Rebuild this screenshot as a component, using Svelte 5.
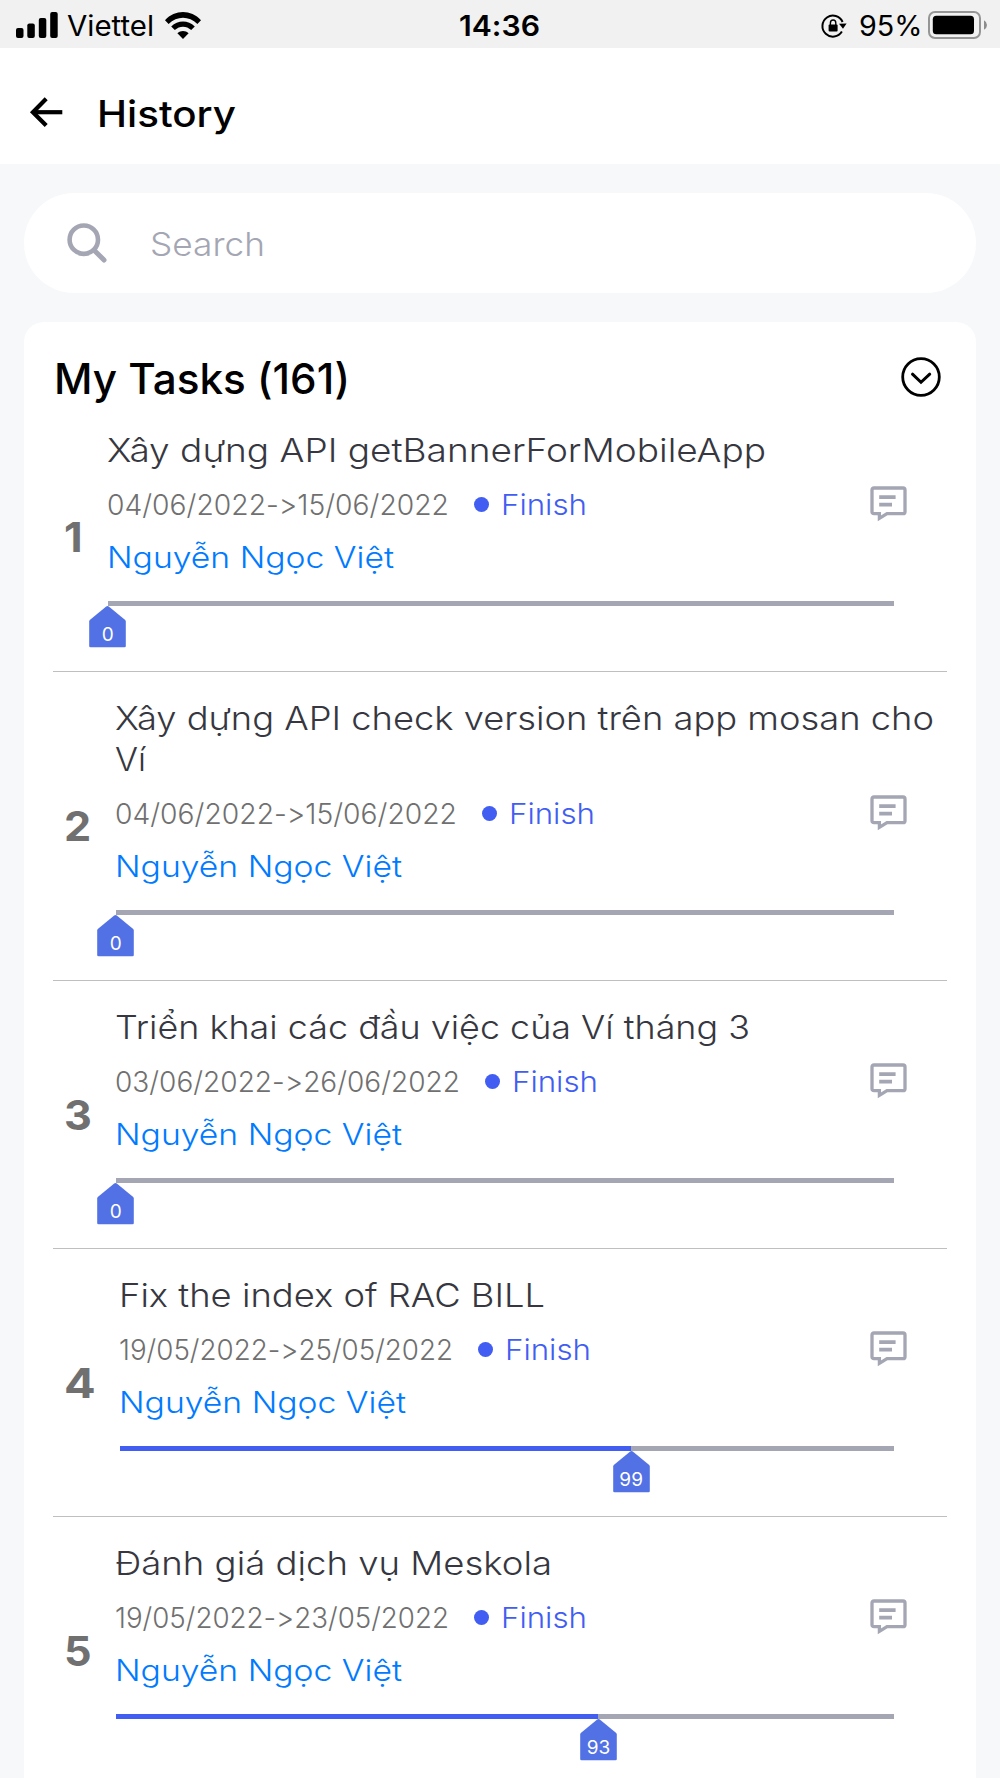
<script>
  const tasks = [
    {
      lines: [{ text: 'Xây dựng API getBannerForMobileApp', width: 659 }],
      dates: '04/06/2022->15/06/2022', datesWidth: 342, progress: 0
    },
    {
      lines: [
        { text: 'Xây dựng API check version trên app mosan cho', width: 819 },
        { text: 'Ví', width: 31 }
      ],
      dates: '04/06/2022->15/06/2022', datesWidth: 342, progress: 0
    },
    {
      lines: [{ text: 'Triển khai các đầu việc của Ví tháng 3', width: 635 }],
      dates: '03/06/2022->26/06/2022', datesWidth: 345, progress: 0
    },
    {
      lines: [{ text: 'Fix the index of RAC BILL', width: 426 }],
      dates: '19/05/2022->25/05/2022', datesWidth: 334, progress: 99
    },
    {
      lines: [{ text: 'Đánh giá dịch vụ Meskola', width: 437 }],
      dates: '19/05/2022->23/05/2022', datesWidth: 334, progress: 93
    }
  ];

  const MAX_PROGRESS = 150;

  // Stretches a single-line label so that it fills the given width.
  function fit(node, width) {
    const natural = node.getBoundingClientRect().width;
    node.style.transformOrigin = '0 50%';
    node.style.transform = `scaleX(${width / natural})`;
    node.style.width = `${natural + 0.1}px`;
    node.style.marginRight = `${width - natural}px`;
  }
</script>

<div class="screen">
  <div class="status">
    <div class="side">
      <svg class="signal" width="42" height="26" viewBox="0 0 42 26">
        <rect x="0" y="16" width="7.5" height="10" rx="2" />
        <rect x="11.3" y="11.5" width="7.5" height="14.5" rx="2" />
        <rect x="22.8" y="6" width="7.5" height="20" rx="2" />
        <rect x="34.2" y="0" width="7.5" height="26" rx="2" />
      </svg>
      <div class="carrier"><span use:fit={87}>Viettel</span></div>
      <svg class="wifi" width="36" height="27" viewBox="0 0 36 27">
        <path d="M0 8.2 C10 -2.7 26 -2.7 36 8.2 L32.4 11.9 C24 3.6 12 3.6 3.6 11.9 Z" />
        <path d="M6.2 14.5 C12.8 7.9 23.2 7.9 29.8 14.5 L26.2 18.1 C21.4 13.6 14.6 13.6 9.8 18.1 Z" />
        <path d="M12.4 21.2 C15.6 18.3 20.4 18.3 23.6 21.2 L18 27 Z" />
      </svg>
    </div>
    <div class="clock"><span use:fit={81}>14:36</span></div>
    <div class="side right">
      <svg class="lock" width="26" height="24" viewBox="0 0 26 24">
        <path d="M20.9 17.6 A10.5 10.5 0 1 1 21.6 8" fill="none" stroke="#000" stroke-width="2" />
        <path d="M18 9.8 L25.6 9.4 L22 14.8 Z" />
        <rect x="7.6" y="10.4" width="9" height="7.2" rx="1" />
        <path d="M9.4 11 V9 A2.7 3 0 0 1 14.8 9 V11" fill="none" stroke="#000" stroke-width="1.4" />
      </svg>
      <div class="percent"><span use:fit={63.5}>95%</span></div>
      <svg class="battery" width="60" height="28" viewBox="0 0 60 28">
        <rect x="1" y="1" width="51" height="26" rx="6" fill="none" stroke="#959595" stroke-width="2" />
        <rect x="4.8" y="4.8" width="41.2" height="18.4" rx="3.5" />
        <path d="M56 9.3 Q59 11 59 14 Q59 17 56 18.7 Z" fill="#8c8c8c" />
      </svg>
    </div>
  </div>

  <header class="header">
    <svg width="33" height="31" viewBox="0 0 33 31" fill="none" stroke="#000" stroke-width="4.2">
      <path d="M3 15.2 H32.3" />
      <path d="M16.2 1.8 L2.9 15.2 L16.2 28.6" />
    </svg>
    <h1 use:fit={139}>History</h1>
  </header>

  <main>
    <div class="search">
      <svg width="40" height="40" viewBox="0 0 40 40" fill="none" stroke="#a4a6b3">
        <circle cx="16.8" cy="16.7" r="14.2" stroke-width="4.6" />
        <path d="M27.4 27.4 L37 37" stroke-width="5" stroke-linecap="round" />
      </svg>
      <span class="placeholder" use:fit={115}>Search</span>
    </div>

    <section class="card">
      <div class="card-head">
        <h2 use:fit={296}>My Tasks (161)</h2>
        <svg class="chevron" width="40" height="40" viewBox="0 0 40 40" fill="none" stroke="#000">
          <circle cx="20" cy="20" r="18.3" stroke-width="2.8" />
          <path d="M11.5 17.2 L20 25.3 L28.7 17.2" stroke-width="3" stroke-linecap="round" />
        </svg>
      </div>

      <ol class="tasks">
        {#each tasks as task, i}
          <li class="task">
            <span class="number">{i + 1}</span>
            <div class="body">
              <div class="title">
                {#each task.lines as line}
                  <div class="line"><span class="label" use:fit={line.width}>{line.text}</span></div>
                {/each}
              </div>
              <div class="meta">
                <span class="label dates" use:fit={task.datesWidth}>{task.dates}</span>
                <span class="dot"></span>
                <span class="label state" use:fit={86}>Finish</span>
                <svg class="comment" width="37" height="37" viewBox="0 0 37 37" fill="none" stroke="#a4a6b3" stroke-width="3.3">
                  <path d="M4 2 H33 Q35 2 35 4 V25.7 Q35 27.7 33 27.7 H17 L9.4 32.4 V27.7 H4 Q2 27.7 2 25.7 V4 Q2 2 4 2 Z" />
                  <path d="M9.2 11.2 H25.6 M9.2 18.6 H22" stroke-width="3.8" />
                </svg>
              </div>
              <div class="person"><span class="label" use:fit={287}>Nguyễn Ngọc Việt</span></div>
              <div class="track">
                <div class="filled" style:width="{(task.progress / MAX_PROGRESS) * 100}%"></div>
                <div class="marker" style:left="{(task.progress / MAX_PROGRESS) * 100}%">
                  <svg width="37" height="42" viewBox="0 0 37 42">
                    <path d="M17.2 .6 Q18.5 -.4 19.8 .6 L36.2 14 Q36.8 14.6 36.8 15.4 V40 Q36.8 41.3 35.5 41.3 H1.5 Q.2 41.3 .2 40 V15.4 Q.2 14.6 .8 14 Z" fill="#5271e4" />
                  </svg>
                  <span class="value">{task.progress}</span>
                </div>
              </div>
            </div>
          </li>
        {/each}
      </ol>
    </section>
  </main>
</div>

<style>
  :global(body) {
    background: #f7f8fa;
  }

  .screen {
    width: 1000px;
    height: 1778px;
    overflow: hidden;
    background: #f7f8fa;
    color: #000;
    font-family: Inter, 'Noto Sans', sans-serif;
    font-feature-settings: 'calt' 0;
  }

  .screen :global(svg) {
    display: block;
    flex: none;
    overflow: visible;
  }

  .status {
    display: grid;
    grid-template-columns: 1fr auto 1fr;
    align-items: center;
    height: 48px;
    padding: 0 12px;
    box-sizing: border-box;
    background: #f1f1f1;
    font-size: 28.5px;
    line-height: 48px;
    white-space: nowrap;
  }

  .status span {
    display: inline-block;
    padding-top: 2px;
  }

  .side {
    display: flex;
    align-items: center;
  }

  .signal {
    margin-left: 4px;
  }

  .right {
    justify-content: flex-end;
  }

  .carrier {
    margin: 0 11px 0 9px;
  }

  .clock {
    font-weight: 600;
  }

  .lock {
    margin: 2px 12px 0 0;
  }

  .percent {
    margin-right: 5px;
  }

  .header {
    display: flex;
    align-items: center;
    gap: 34px;
    height: 116px;
    padding: 0 30px;
    box-sizing: border-box;
    background: #fff;
  }

  .header svg {
    margin-top: 13px;
  }

  h1,
  h2 {
    flex: none;
    margin: 0;
    font-weight: 450;
    white-space: nowrap;
  }

  h1 {
    padding-top: 15px;
    font-size: 36.5px;
    line-height: 44px;
  }

  main {
    padding: 29px 24px 0;
  }

  .search {
    display: flex;
    align-items: center;
    gap: 43px;
    height: 100px;
    padding-left: 43px;
    border-radius: 50px;
    background: #fff;
  }

  .placeholder {
    padding-top: 1px;
    color: #a4a6b3;
    font-size: 33px;
    font-weight: 300;
    white-space: nowrap;
  }

  .card {
    height: 1500px;
    margin-top: 29px;
    padding: 0 29px;
    border-radius: 20px;
    background: #fff;
  }

  .card-head {
    display: flex;
    align-items: flex-start;
    justify-content: space-between;
    height: 82px;
    padding: 32px 6px 0 1px;
    box-sizing: border-box;
  }

  h2 {
    font-size: 42.5px;
    line-height: 50px;
  }

  .chevron {
    margin-top: 3px;
  }

  .tasks {
    margin: 0;
    padding: 0;
    list-style: none;
  }

  .task {
    display: grid;
    grid-template-columns: 62.5px 1fr;
    padding: 25px 0 65px;
    border-bottom: 1.4px solid #bfbfbf;
  }

  .task:first-child {
    grid-template-columns: 54.5px 1fr;
  }

  .task:nth-child(4) {
    grid-template-columns: 67px 1fr;
  }

  .number {
    align-self: center;
    justify-self: start;
    margin: 40px 0 0 11px;
    color: #707070;
    font-size: 41.5px;
    font-weight: 700;
    line-height: 50px;
    transform: scaleX(1.04);
    transform-origin: 0 50%;
  }

  .task:nth-child(4) .number {
    transform: scaleX(1.13);
  }

  .label {
    display: inline-block;
    flex: none;
    white-space: nowrap;
    font-weight: 300;
  }

  .title {
    color: #363740;
    font-size: 33px;
    line-height: 42px;
  }

  .line {
    height: 41.2px;
    margin-left: -1px;
  }

  .meta {
    display: flex;
    align-items: center;
    height: 40px;
    margin-top: 14.6px;
    font-size: 28.5px;
    line-height: 40px;
  }

  .dates {
    margin-left: -0.7px;
    color: #707070;
  }

  .dot {
    width: 15px;
    height: 15px;
    margin: 0 12px 0 24.7px;
    border-radius: 50%;
    background: #415df2;
  }

  .state {
    color: #415df2;
  }

  .comment {
    margin: 0 40px 0 auto;
  }

  .person {
    height: 40px;
    margin-top: 12px;
    margin-left: -0.7px;
    color: #007aff;
    font-size: 29.5px;
    line-height: 41px;
  }

  .track {
    position: relative;
    height: 5px;
    margin: 24.2px 53px 0 0;
    background: #a4a6b3;
  }

  .filled {
    height: 5px;
    background: #415df2;
  }

  .marker {
    position: absolute;
    top: 5px;
    width: 37px;
    height: 42px;
    margin-left: -18.2px;
  }

  .value {
    position: absolute;
    inset: 17px 0 auto;
    color: #fff;
    font-size: 19px;
    line-height: 24px;
    text-align: center;
  }
</style>
